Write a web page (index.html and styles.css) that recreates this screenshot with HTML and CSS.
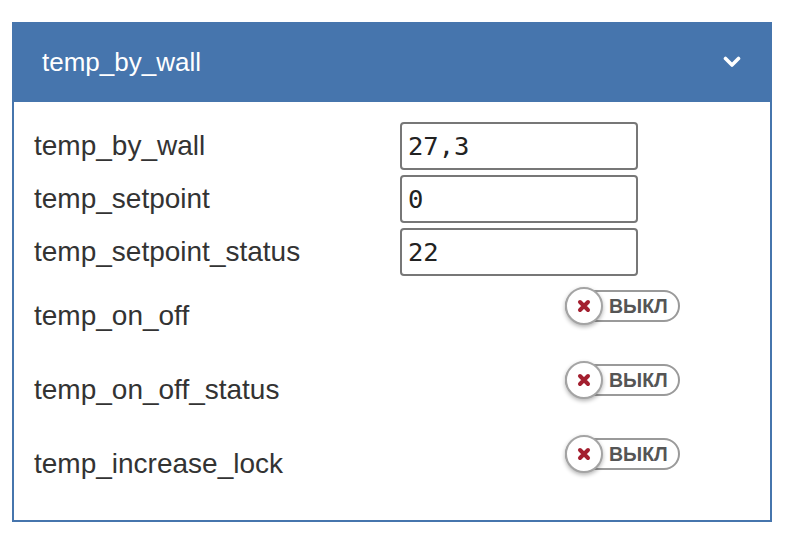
FILE: index.html
```html
<!DOCTYPE html>
<html lang="ru">

<head>
    <meta charset="UTF-8">
    <title>temp_by_wall</title>
    <link rel="stylesheet" href="styles.css">
</head>

<body>
    <div class="panel">
        <div class="panel-head">
            <span class="panel-title">temp_by_wall</span>
            <svg class="chevron" width="18" height="12" viewBox="0 0 18 12">
                <polyline points="2.5,2.5 9,9 15.5,2.5" fill="none" stroke="#fff" stroke-width="3.6" stroke-linecap="round" stroke-linejoin="round"/>
            </svg>
        </div>

        <div class="panel-body">
            <div class="row">
                <label>temp_by_wall</label>
                <input class="val" type="text" value="27,3" readonly>
            </div>
            <div class="row">
                <label>temp_setpoint</label>
                <input class="val" type="text" value="0" readonly>
            </div>
            <div class="row">
                <label>temp_setpoint_status</label>
                <input class="val" type="text" value="22" readonly>
            </div>

            <div class="row row-switch">
                <label>temp_on_off</label>
                <span class="switch">
                    <span class="knob">
                        <svg width="16" height="16" viewBox="0 0 16 16"><path d="M4 4L12 12M12 4L4 12" stroke="#a31f2f" stroke-width="4" stroke-linecap="round"/></svg>
                    </span>
                    <span class="state">ВЫКЛ</span>
                </span>
            </div>
            <div class="row row-switch">
                <label>temp_on_off_status</label>
                <span class="switch">
                    <span class="knob">
                        <svg width="16" height="16" viewBox="0 0 16 16"><path d="M4 4L12 12M12 4L4 12" stroke="#a31f2f" stroke-width="4" stroke-linecap="round"/></svg>
                    </span>
                    <span class="state">ВЫКЛ</span>
                </span>
            </div>
            <div class="row row-switch">
                <label>temp_increase_lock</label>
                <span class="switch">
                    <span class="knob">
                        <svg width="16" height="16" viewBox="0 0 16 16"><path d="M4 4L12 12M12 4L4 12" stroke="#a31f2f" stroke-width="4" stroke-linecap="round"/></svg>
                    </span>
                    <span class="state">ВЫКЛ</span>
                </span>
            </div>
        </div>
    </div>
</body>

</html>
```

FILE: styles.css
```css
body {
    margin: 0;
    background: #fff;
    font-family: "Liberation Sans", Arial, sans-serif;
}

.panel {
    width: 760px;
    margin: 22px 0 0 12px;
    border: 2px solid #4675ad;
    box-sizing: border-box;
    background: #fff;
}

.panel-head {
    height: 78px;
    background: #4675ad;
    color: #fff;
    display: flex;
    align-items: center;
    justify-content: space-between;
    padding: 0 29px 0 28px;
}

.panel-title {
    font-size: 26px;
    margin-top: -2px;
}

.chevron {
    margin-top: -2px;
}

.panel-body {
    display: flex;
    flex-direction: column;
    gap: 5px;
    padding: 20px 20px 22px 20px;
}

.row {
    display: grid;
    grid-template-columns: 366px 238px;
    align-items: center;
}

.row label {
    font-size: 28px;
    line-height: 32px;
    color: #333;
}

.val {
    height: 48px;
    box-sizing: border-box;
    border: 2px solid #777;
    border-radius: 4px;
    padding: 0 6px;
    font-family: "DejaVu Sans Mono", monospace;
    font-size: 25.5px;
    color: #222;
    background: #fff;
    outline: none;
}

.row-switch {
    height: 69px;
    align-items: start;
}

.row-switch label {
    margin-top: 19px;
}

.switch {
    margin: 9px 0 0 165px;
    width: 115px;
    height: 32px;
    box-sizing: border-box;
    border: 2px solid #9a9a9a;
    border-radius: 16px;
    display: flex;
    align-items: center;
}

.knob {
    width: 38px;
    height: 38px;
    box-sizing: border-box;
    margin: -5px 0 -5px -2px;
    border: 2px solid #a4a4a4;
    border-radius: 50%;
    background: #fff;
    box-shadow: 0 2px 4px rgba(0, 0, 0, 0.3);
    display: flex;
    align-items: center;
    justify-content: center;
    flex-shrink: 0;
}

.state {
    margin-left: 6px;
    font-size: 19.5px;
    font-weight: bold;
    color: #555;
}
```
